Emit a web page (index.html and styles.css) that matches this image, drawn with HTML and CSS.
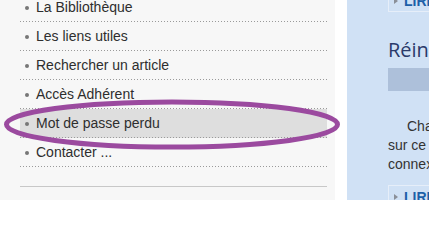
FILE: index.html
```html
<!DOCTYPE html>
<html lang="fr">
<head>
<meta charset="utf-8">
<title>Mot de passe perdu</title>
<link rel="stylesheet" href="styles.css">
</head>
<body>
<div class="page">
  <aside class="sidebar">
    <ul class="menu">
      <li class="menu-item"><span class="bullet"></span>La Bibliothèque</li>
      <li class="menu-item"><span class="bullet"></span>Les liens utiles</li>
      <li class="menu-item"><span class="bullet"></span>Rechercher un article</li>
      <li class="menu-item"><span class="bullet"></span>Accès Adhérent</li>
      <li class="menu-item active"><span class="bullet"></span>Mot de passe perdu</li>
      <li class="menu-item"><span class="bullet"></span>Contacter ...</li>
    </ul>
    <div class="rule"></div>
  </aside>
  <main class="content">
    <div class="btn btn-top"><span class="tri"></span>LIRE LA SUITE</div>
    <h2 class="title">Réinitialiser votre mot de passe</h2>
    <div class="bar"></div>
    <p class="text">Changez votre mot de passe si vous l'avez oublié : entrez votre identifiant<br>sur ce formulaire pour recevoir un lien de réinitialisation<br>connexion par courriel.</p>
    <div class="btn"><span class="tri"></span>LIRE LA SUITE</div>
  </main>
</div>
<svg class="mark" width="429" height="200" viewBox="0 0 429 200" aria-hidden="true">
  <ellipse cx="172" cy="124.5" rx="165.5" ry="22.5" fill="none" stroke="#9b4a9f" stroke-width="5"/>
</svg>
</body>
</html>
```
FILE: styles.css
```css
html, body {
  margin: 0;
  padding: 0;
  background: #ffffff;
  overflow: hidden;
  width: 429px;
  height: 200px;
}
body {
  position: relative;
  font-family: "Liberation Sans", Arial, sans-serif;
  font-size: 14px;
  color: #333333;
}
.page {
  display: flex;
  gap: 12px;
  height: 200px;
}
.sidebar {
  flex: 0 0 335px;
  background: #f7f7f7;
  padding: 0 8px 0 20px;
  box-sizing: border-box;
}
.menu {
  list-style: none;
  margin: -7px 0 0 0;
  padding: 0;
}
.menu-item {
  display: flex;
  align-items: center;
  height: 29px;
  box-sizing: border-box;
  padding: 1px 0 2px 5px;
  line-height: 28px;
  color: #2e2e2e;
  background-image: linear-gradient(to right, #9a9a9a 1px, transparent 1px);
  background-size: 3px 1px;
  background-repeat: repeat-x;
  background-position: left bottom;
}
.menu-item.active {
  background-color: #dedede;
}
.bullet {
  width: 4px;
  height: 4px;
  border-radius: 50%;
  background: #777777;
  margin-right: 7px;
  margin-top: 1px;
  flex: 0 0 auto;
}
.rule {
  margin-top: 19px;
  height: 1px;
  background: #c8c8c8;
}
.content {
  flex: 0 0 auto;
  width: 600px;
  background: #d0e1f5;
  padding-left: 41px;
  box-sizing: border-box;
  display: flex;
  flex-direction: column;
  align-items: flex-start;
}
.content > * {
  flex-shrink: 0;
}
.btn {
  border: 1px solid #e6eef9;
  padding: 3px 10px 2px 4px;
  line-height: 16px;
  font-weight: bold;
  color: #1d5fa8;
  display: flex;
  align-items: center;
  white-space: nowrap;
  margin-top: 11px;
}
.btn-top {
  margin-top: -11px;
}
.tri {
  width: 0;
  height: 0;
  border-top: 3px solid transparent;
  border-bottom: 3px solid transparent;
  border-left: 4px solid #8a8f98;
  margin-right: 6px;
  margin-left: 1px;
}
.title {
  margin: 26px 0 0 0;
  font-family: "Open Sans", "Liberation Sans", sans-serif;
  font-weight: normal;
  font-size: 20px;
  line-height: 24px;
  color: #2a3a6a;
  white-space: nowrap;
}
.bar {
  margin-top: 6px;
  height: 23px;
  width: 100%;
  background: #adc0da;
}
.text {
  margin: 26px 0 0 0;
  line-height: 19px;
  text-indent: 19px;
  white-space: nowrap;
  color: #333333;
}
.mark {
  position: absolute;
  left: 0;
  top: 0;
  pointer-events: none;
}
```
